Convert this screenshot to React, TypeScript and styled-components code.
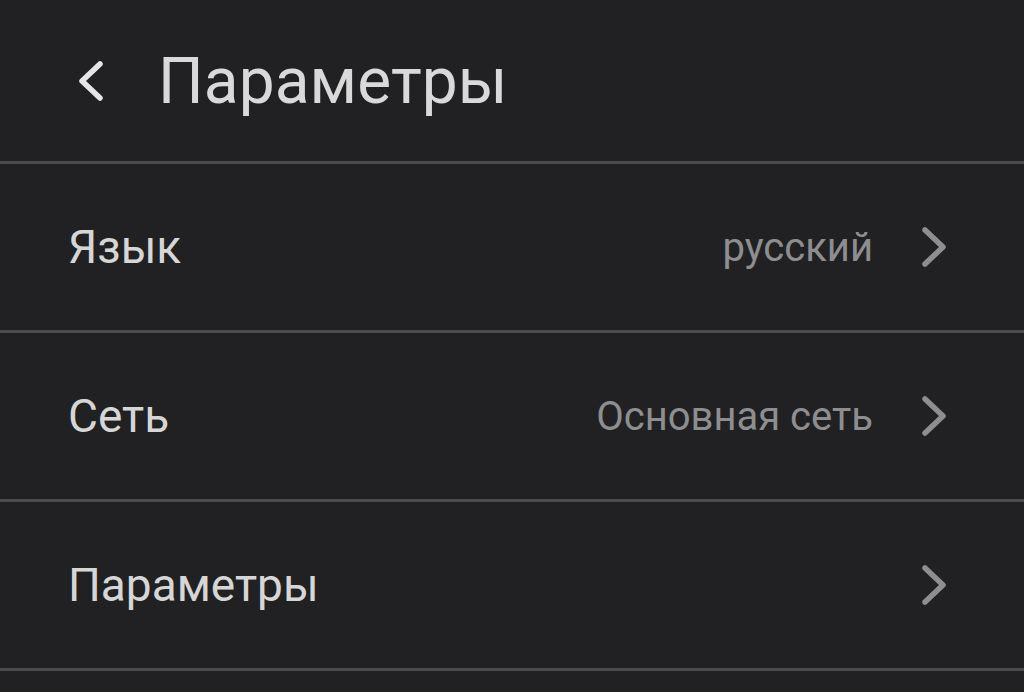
import React from "react";
import styled, { createGlobalStyle } from "styled-components";

const Global = createGlobalStyle`
  html, body { margin: 0; padding: 0; background: #212123; }
  body { font-family: Roboto, "Noto Sans", sans-serif; }
`;

const Page = styled.div`
  width: 1024px;
  height: 692px;
  background: #212123;
  overflow: hidden;
  display: flex;
  flex-direction: column;
`;

const Header = styled.header`
  height: 164px;
  display: flex;
  align-items: center;
  padding-left: 78px;
  gap: 54px;
  box-sizing: border-box;
  border-bottom: 3px solid #4b4b4d;
  flex-shrink: 0;
`;

const Title = styled.h1`
  margin: 0;
  font-size: 64px;
  font-weight: 400;
  color: #d9d9d9;
  letter-spacing: 0.1px;
  line-height: 1;
  padding-top: 2px;
`;

const Row = styled.div`
  height: 166px;
  display: flex;
  align-items: center;
  padding: 0 77px 0 68px;
  border-bottom: 3px solid #4b4b4d;
  flex-shrink: 0;
`;

const Label = styled.span`
  font-size: 46px;
  color: #d6d6d6;
  flex: 1;
`;

const Value = styled.span`
  font-size: 40px;
  color: #8e8e90;
  margin-right: 48px;
`;

const Chevron = ({ dir, color }: { dir: "left" | "right"; color: string }) => (
  <svg width="26" height="42" viewBox="0 0 26 42" fill="none">
    <path
      d={dir === "left" ? "M22 4 L4 21 L22 38" : "M4 4 L22 21 L4 38"}
      stroke={color}
      strokeWidth="5.5"
      strokeLinecap="round"
      strokeLinejoin="round"
    />
  </svg>
);

const rows = [
  { label: "Язык", value: "русский" },
  { label: "Сеть", value: "Основная сеть" },
  { label: "Параметры", value: "" },
];

export default function App() {
  return (
    <Page>
      <Global />
      <Header>
        <Chevron dir="left" color="#e6e6e6" />
        <Title>Параметры</Title>
      </Header>
      {rows.map((r) => (
        <Row key={r.label}>
          <Label>{r.label}</Label>
          {r.value && <Value>{r.value}</Value>}
          <Chevron dir="right" color="#8e8e90" />
        </Row>
      ))}
    </Page>
  );
}
